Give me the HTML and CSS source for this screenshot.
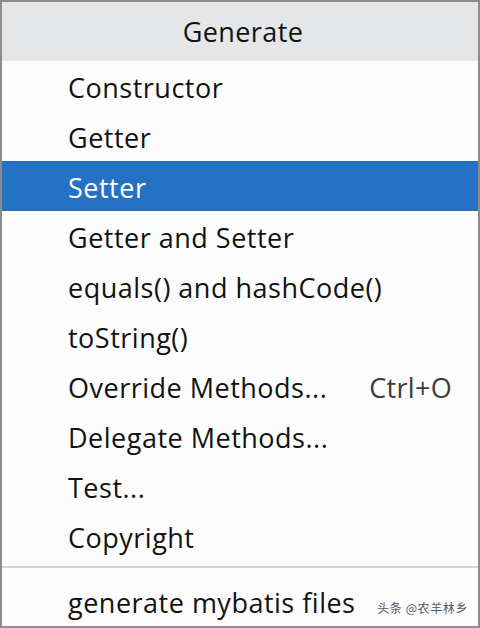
FILE: index.html
```html
<!DOCTYPE html>
<html>
<head>
<meta charset="utf-8">
<link rel="stylesheet" href="styles.css">
</head>
<body>
<div class="menu">
  <div class="title">Generate</div>
  <div class="items">
    <div class="item">Constructor</div>
    <div class="item">Getter</div>
    <div class="item selected">Setter</div>
    <div class="item">Getter and Setter</div>
    <div class="item">equals() and hashCode()</div>
    <div class="item">toString()</div>
    <div class="item"><span>Override Methods...</span><span class="shortcut">Ctrl+O</span></div>
    <div class="item">Delegate Methods...</div>
    <div class="item">Test...</div>
    <div class="item">Copyright</div>
  </div>
  <div class="sep"></div>
  <div class="item last">generate mybatis files<span class="mark">头条 @农羊林乡</span></div>
</div>
</body>
</html>
```
FILE: styles.css
```css
html, body {
  margin: 0;
  padding: 0;
  background: #ffffff;
}
.menu {
  width: 480px;
  height: 628px;
  box-sizing: border-box;
  border: 2px solid #8c8c8c;
  background: #fcfcfd;
  font-family: "Open Sans", "Noto Sans", sans-serif;
  color: #121212;
  display: flex;
  flex-direction: column;
  position: relative;
}
.title {
  height: 59px;
  background: #e5e6e8;
  display: flex;
  align-items: center;
  justify-content: center;
  font-size: 27px;
  letter-spacing: 0.4px;
  padding-left: 6px;
}
.items {
  display: flex;
  flex-direction: column;
}
.item {
  height: 50px;
  display: flex;
  align-items: center;
  padding-left: 66px;
  padding-right: 26px;
  padding-top: 2px;
  box-sizing: border-box;
  font-size: 27px;
  letter-spacing: 0.5px;
  justify-content: space-between;
}
.item.selected {
  background: #2572c4;
  color: #ffffff;
}
.shortcut {
  color: #3c3c3c;
  letter-spacing: 0.3px;
}
.sep {
  height: 2px;
  background: #d3d3d6;
  margin-top: 5px;
}
.item.last {
  height: 58px;
  padding-top: 10px;
  justify-content: flex-start;
  position: relative;
}
.mark {
  position: absolute;
  right: 10px;
  top: 31px;
  font-family: "Noto Sans CJK SC", sans-serif;
  font-size: 12px;
  letter-spacing: 0.6px;
  color: #555555;
}
```
